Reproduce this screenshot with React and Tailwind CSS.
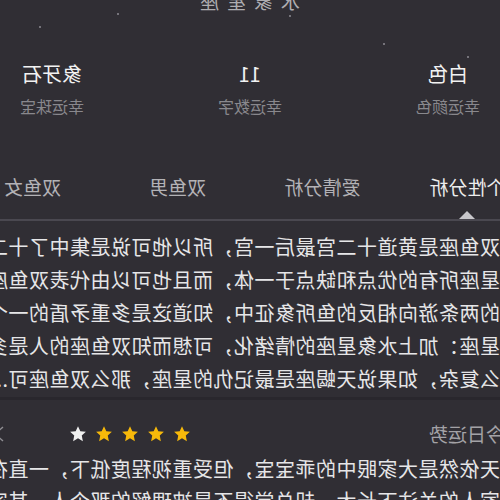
import { useState } from "react";

const dots = [
  { x: 381, y: 13 },
  { x: 459, y: 26 },
  { x: 209, y: 15 },
  { x: 115, y: 43 },
  { x: 31, y: 56 },
];

const stats = [
  { value: "白色", label: "幸运颜色" },
  { value: "11", label: "幸运数字" },
  { value: "象牙石", label: "幸运珠宝" },
];

const tabs = ["个性分析", "爱情分析", "双鱼男", "双鱼女"];

const lines = [
  "双鱼座是黄道十二宫最后一宫，所以他可说是集中了十二",
  "星座所有的优点和缺点于一体，而且也可以由代表双鱼座",
  "的两条游向相反的鱼所象征中，知道这是多重矛盾的一个",
  "星座：加上水象星座的情绪化，可想而知双鱼座的人是多",
  "么复杂，如果说天蝎座是最记仇的星座，那么双鱼座可...",
];

function StarIcon({ color }) {
  return (
    <svg width="18" height="18" viewBox="0 0 24 24">
      <polygon
        points="12,1.5 15.1,8.3 22.5,9.1 17,14.1 18.5,21.5 12,17.8 5.5,21.5 7,14.1 1.5,9.1 8.9,8.3"
        fill={color}
      />
    </svg>
  );
}

export default function App() {
  const [active, setActive] = useState(0);

  return (
    <div
      className="relative w-[500px] h-[500px] overflow-hidden bg-[#302e34] -scale-x-100"
      style={{ fontFamily: '"Noto Sans CJK SC", "Noto Sans", sans-serif' }}
    >
      {/* little stars */}
      {dots.map((d, i) => (
        <div
          key={i}
          className="absolute w-[2px] h-[2px] rounded-full bg-[#8d8b92]"
          style={{ left: d.x, top: d.y }}
        ></div>
      ))}

      <div className="-mt-[11px] h-[24px] leading-[24px] text-center text-[19px] tracking-[8px] pl-[8px] text-[#aeadb1]">
        水象星座
      </div>

      {/* lucky stats */}
      <div className="mt-[49px] flex justify-between px-[20px]">
        {stats.map((s) => (
          <div key={s.label} className="flex flex-col items-center">
            <span className="text-[20px] leading-[24px] text-[#f2f2f2]">
              {s.value}
            </span>
            <span className="mt-[10px] text-[16px] leading-[20px] text-[#89888d]">
              {s.label}
            </span>
          </div>
        ))}
      </div>

      {/* tabs */}
      <div className="mt-[59px] border-b-2 border-[#4a4850]">
        <div className="flex -ml-[40px] h-[44px]">
          {tabs.map((t, i) => (
            <div
              key={t}
              onClick={() => setActive(i)}
              className={`relative shrink-0 w-[145px] text-center text-[19px] leading-[24px] cursor-pointer ${
                active === i ? "text-[#ededed]" : "text-[#b3b2b6]"
              }`}
            >
              {t}
              {active === i && (
                <div className="absolute bottom-0 left-1/2 -translate-x-1/2 w-0 h-0 border-x-[8px] border-x-transparent border-b-[8px] border-b-[#c8c7cb]"></div>
              )}
            </div>
          ))}
        </div>
      </div>

      {/* personality text */}
      <div className="pt-[9px] text-[20px] leading-[33px] tracking-[0.5px] text-[#e6e6e8]">
        {lines.map((l, i) => (
          <div key={i} className="whitespace-nowrap">
            {l}
          </div>
        ))}
      </div>

      <div className="mt-[2px] h-[3px] bg-[#29272d]"></div>

      {/* today's fortune */}
      <div className="mt-[22px] flex items-center h-[24px] whitespace-nowrap">
        <span className="-ml-[5px] text-[19px] leading-[24px] text-[#a3a2a6]">
          今日运势
        </span>
        <div className="ml-[238px] flex gap-[8px] shrink-0">
          <StarIcon color="#f7b90a" />
          <StarIcon color="#f7b90a" />
          <StarIcon color="#f7b90a" />
          <StarIcon color="#f7b90a" />
          <StarIcon color="#f0f0f0" />
        </div>
        <svg
          className="ml-[64px] shrink-0"
          width="12"
          height="18"
          viewBox="0 0 12 18"
          fill="none"
          stroke="#8f8e93"
          strokeWidth="1.5"
        >
          <polyline points="2,2 10,9 2,16" />
        </svg>
      </div>

      <div className="mt-[7px] text-[20px] leading-[32px] tracking-[0.5px] text-[#e6e6e8]">
        <div className="whitespace-nowrap">
          天依然是大家眼中的乖宝宝，但受重视程度低下，一直在
        </div>
        <div className="whitespace-nowrap">
          家人的关注下长大，却总觉得不是被理解的那个人，其实
        </div>
      </div>
    </div>
  );
}
